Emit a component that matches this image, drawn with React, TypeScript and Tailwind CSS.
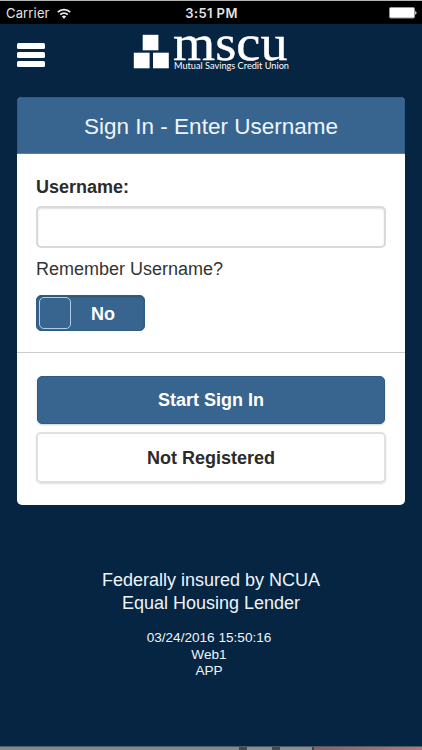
import React, { useState } from 'react';

const StatusBar: React.FC = () => (
  <div className="h-6 shrink-0 border-t border-[#b4b4b4] bg-black text-[#e4e4e4] flex items-center justify-between pl-1.5 pr-[5px] pt-px">
    <div className="flex-1 flex items-center gap-[7px] text-[13px] leading-none font-['Inter',sans-serif]">
      <span className="tracking-[0.15px]">Carrier</span>
      <svg width="14" height="11" viewBox="0 0 14 11" fill="none" stroke="#eeeeee" strokeWidth="1.8">
        <path d="M.8 4.1a8.9 8.9 0 0 1 12.4 0" />
        <path d="M3.2 6.7a5.5 5.5 0 0 1 7.6 0" />
        <path d="M4.8 8.5a3.2 3.2 0 0 1 4.4 0L7 10.8z" fill="#eeeeee" stroke="none" />
      </svg>
    </div>
    <span className="text-[13px] leading-none font-semibold tracking-[0.4px] font-['Inter',sans-serif]">
      3:51 PM
    </span>
    <div className="flex-1 flex justify-end">
      <svg width="28" height="12" viewBox="0 0 28 12">
        <rect x=".5" y=".5" width="25" height="10.5" rx="1.3" fill="#ffffff" stroke="#999999" />
        <path d="M26.2 4c1.8.3 1.8 3.4 0 3.7z" fill="#dddddd" />
      </svg>
    </div>
  </div>
);

const Logo: React.FC = () => (
  <svg width="158" height="42" viewBox="0 0 158 42" fill="#ffffff" className="overflow-visible">
    <rect x="12.7" y="4.8" width="15.7" height="15.5" />
    <rect x="3.8" y="22.7" width="15.8" height="15.6" />
    <rect x="23" y="22.7" width="15.8" height="15.6" />
    <text
      x="43"
      y="29.5"
      fontFamily="'Liberation Serif', serif"
      fontSize="51"
      stroke="#ffffff"
      strokeWidth=".4"
      textLength="114.5"
      lengthAdjust="spacingAndGlyphs"
    >
      mscu
    </text>
    <text x="44" y="39.3" fontFamily="Lato, sans-serif" fontSize="8.8" textLength="115" lengthAdjust="spacingAndGlyphs">
      Mutual Savings Credit Union
    </text>
  </svg>
);

const App: React.FC = () => {
  const [username, setUsername] = useState('');

  return (
    <div className="h-[750px] w-full overflow-hidden bg-[#052542] flex flex-col font-['Liberation_Sans',Arial,sans-serif]">
      <StatusBar />

      <header className="h-[73px] shrink-0 flex items-start">
        <button aria-label="Menu" className="ml-[17px] mt-[19px] w-7 flex flex-col gap-[3.5px]">
          <span className="h-[5.5px] rounded-[1.5px] bg-white" />
          <span className="h-[5.5px] rounded-[1.5px] bg-white" />
          <span className="h-[5.5px] rounded-[1.5px] bg-white" />
        </button>
        <div className="ml-[85px] mt-[6px]">
          <Logo />
        </div>
      </header>

      <main className="mx-[17px] h-[408px] shrink-0 rounded-[5px] bg-white overflow-hidden text-[#2b2b2b] text-[18px]">
        <h1 className="h-[57px] bg-[#38658f] border border-[#305b85] border-b-[#5c80a5] text-[#eef5fc] text-[22.5px] leading-[58px] text-center">
          Sign In - Enter Username
        </h1>
        <div className="h-[199px] px-[19px] pt-[22px] border-b border-[#cccccc]">
          <label htmlFor="username" className="block font-bold leading-[22px]">Username:</label>
          <input
            id="username"
            value={username}
            onChange={(e) => setUsername(e.target.value)}
            className="block mt-2 h-[42px] w-[350px] rounded-[5px] border-2 border-[#d9d9d9] px-2 shadow-[inset_0_1px_2px_#00000020] outline-none"
          />
          <p className="mt-[10px] leading-[22px] text-[#333333]">Remember Username?</p>
          <button className="mt-[15px] h-9 w-[109px] rounded-[5px] border border-[#305b85] bg-[#38658f] shadow-[inset_0_1px_2px_#00000030] flex items-center px-0.5">
            <span className="h-8 w-8 rounded-[5px] border border-[#b3cde4]" />
            <span className="flex-1 pt-0.5 pr-[7px] text-center font-bold text-white">No</span>
          </button>
        </div>
        <div className="px-[19px] pt-[23px] flex flex-col gap-2 font-bold">
          <button className="mx-px h-12 rounded-[5px] border border-[#305b85] bg-[#38658f] text-white shadow-[0_1px_2px_#00000030] pt-px">
            Start Sign In
          </button>
          <button className="h-[51px] rounded-[5px] border-2 border-[#e0e0e0] shadow-[0_1px_2px_#00000020] pt-0.5">
            Not Registered
          </button>
        </div>
      </main>

      <footer className="pt-[64px] text-center text-[#eef4fa]">
        <p className="text-[18px] leading-[22.5px]">
          Federally insured by NCUA
          <br />
          Equal Housing Lender
        </p>
        <p className="mt-4 pr-1 text-[13.6px] leading-[16.7px]">
          03/24/2016 15:50:16
          <br />
          Web1
          <br />
          APP
        </p>
      </footer>

      <div className="mt-auto h-1 shrink-0 border-t border-[#4c5a66] flex">
        <span className="w-[239px] bg-[#858987]" />
        <span className="w-2 bg-[#444a4b]" />
        <span className="w-[25px] bg-[#8b908e]" />
        <span className="w-2 bg-[#444a4b]" />
        <span className="w-8 bg-[#8b908e]" />
        <span className="w-0.5 bg-[#444048]" />
        <span className="flex-1 bg-linear-to-r from-[#8d6062] to-[#b57877]" />
      </div>
    </div>
  );
};

export default App;
